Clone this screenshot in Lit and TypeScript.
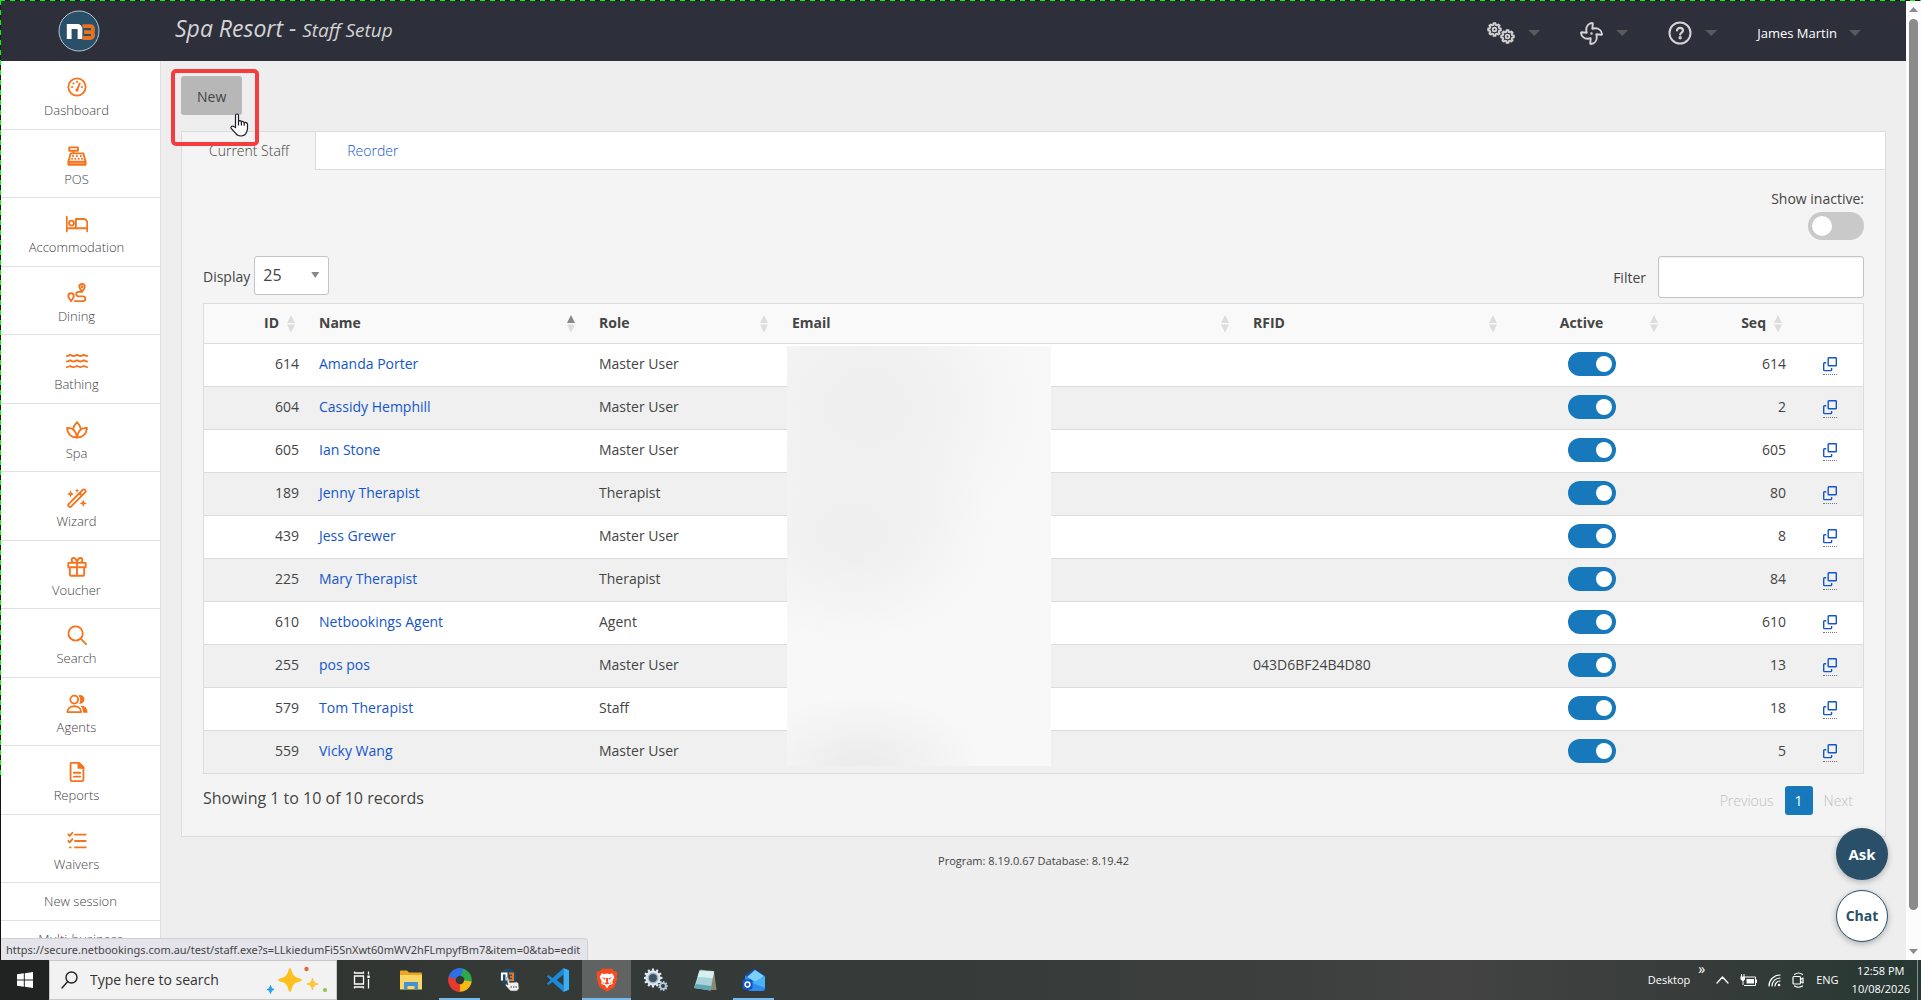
import { LitElement, html, css, svg, nothing } from "lit";
import { customElement, state } from "lit/decorators.js";
import { classMap } from "lit/directives/class-map.js";

interface Staff {
  id: number;
  name: string;
  role: string;
  rfid?: string;
  seq: number;
}

const STAFF: Staff[] = [
  { id: 614, name: "Amanda Porter", role: "Master User", seq: 614 },
  { id: 604, name: "Cassidy Hemphill", role: "Master User", seq: 2 },
  { id: 605, name: "Ian Stone", role: "Master User", seq: 605 },
  { id: 189, name: "Jenny Therapist", role: "Therapist", seq: 80 },
  { id: 439, name: "Jess Grewer", role: "Master User", seq: 8 },
  { id: 225, name: "Mary Therapist", role: "Therapist", seq: 84 },
  { id: 610, name: "Netbookings Agent", role: "Agent", seq: 610 },
  { id: 255, name: "pos pos", role: "Master User", rfid: "043D6BF24B4D80", seq: 13 },
  { id: 579, name: "Tom Therapist", role: "Staff", seq: 18 },
  { id: 559, name: "Vicky Wang", role: "Master User", seq: 5 },
];

const gearPath = (cx: number, cy: number, teeth: number, outer: number, inner: number) => {
  const points: string[] = [];
  const step = (Math.PI * 2) / teeth;
  for (let i = 0; i < teeth; i++) {
    const a = i * step;
    for (const [offset, r] of [[-0.3, inner], [-0.2, outer], [0.2, outer], [0.3, inner]]) {
      const x = cx + r * Math.cos(a + offset * step);
      const y = cy + r * Math.sin(a + offset * step);
      points.push(`${x.toFixed(2)} ${y.toFixed(2)}`);
    }
  }
  return `M${points.join("L")}Z`;
};

const NAV_ICONS: Record<string, unknown> = {
  Dashboard: svg`<circle cx="12" cy="12" r="9.4"/><circle cx="12" cy="15.3" r="1.8" fill="currentColor" stroke="none"/><path d="M12.300 14.600 15 8"/><g fill="currentColor" stroke="none"><circle cx="6.600" cy="12" r="1.200"/><circle cx="8.200" cy="8.200" r="1.200"/><circle cx="12" cy="6.400" r="1.200"/><circle cx="17.400" cy="12" r="1.200"/></g>`,
  POS: svg`<path d="M3.500 2.500h9.500v3.800H3.500zM8.200 6.300V9M5 9.200h14l2.200 8.200v4H2.800v-4z"/><path d="M2.800 18.300h18.400v3H2.800z" fill="currentColor" fill-opacity=".35"/><path d="M7.500 12h.3M11.800 12h.3M16 12h.3M6.500 15h.3M10 15h.3M13.700 15h.3M17.300 15h.3" stroke-width="2"/>`,
  Accommodation: svg`<path d="M.8 4v16M.8 16.600h22.400M23.200 20v-9.500a4 4 0 0 0-4-4h-8.400v10"/><circle cx="6" cy="11" r="2.700"/>`,
  Dining: svg`<path d="M17.500 10.500c-2-2.500-3-4-3-5.500a3 3 0 0 1 6 0c0 1.500-1 3-3 5.500z"/><path d="M5.500 20.800c-2-2.600-3-4-3-5.500a3 3 0 0 1 6 0c0 1.500-1 2.900-3 5.500z"/><path d="M17.500 10.800h-4a2.400 2.400 0 0 0 0 4.800h5a2.600 2.600 0 0 1 0 5.200h-9"/><circle cx="17.500" cy="5.200" r=".6" fill="currentColor"/>`,
  Bathing: svg`<path d="M1 6.500q1.800 0 3.600-1.400 2 1.700 3.700 1.400 1.900 0 3.700-1.400 1.900 1.500 3.700 1.400 1.900 0 3.700-1.400 1.800 1.400 3.600 1.400M1 12.500q1.800 0 3.600-1.400 2 1.700 3.700 1.400 1.900 0 3.700-1.400 1.900 1.500 3.700 1.400 1.900 0 3.700-1.400 1.800 1.400 3.600 1.400M1 18.700q1.800 0 3.600-1.400 2 1.700 3.700 1.400 1.900 0 3.700-1.400 1.900 1.500 3.700 1.400 1.900 0 3.700-1.400 1.800 1.400 3.600 1.400"/>`,
  Spa: svg`<path d="M12 20.200C6 20.500 1.600 16.500 1.200 9.800c5.600-.4 9.700 3.200 10.800 10.400 1.100-7.200 5.200-10.800 10.800-10.400-.4 6.700-4.800 10.700-10.800 10.400z"/><path d="M8 10.300c.6-2.600 2-4.700 4-6.800 2 2.100 3.400 4.200 4 6.800"/>`,
  Wizard: svg`<path d="m2.800 18.600 15.600-15.600a1.500 1.500 0 0 1 2.200 0l.5.500a1.500 1.500 0 0 1 0 2.200L5.500 21.300a1.500 1.500 0 0 1-2.200 0l-.5-.500a1.500 1.500 0 0 1 0-2.200zM14.800 6.800l2.600 2.600"/><g fill="currentColor" stroke="none"><path d="M5 3.500 6.200 6.500 9 7.500 6.200 8.600 5 11.500 3.900 8.600.8 7.500 3.900 6.500zM12 1.500l.7 1.800 1.800.7-1.800.7L12 6.500l-.7-1.800L9.500 4l1.800-.7zM18.800 13.500l1.200 3 3 1.200-3 1.200-1.200 3-1.200-3-3-1.200 3-1.200z"/></g>`,
  Voucher: svg`<path d="M2.500 7.500h19v4.800h-19zM4.200 12.300h15.600v8.200a1 1 0 0 1-1 1H5.200a1 1 0 0 1-1-1zM12 7.500v14M12 7.200C11.300 4 9.800 2 8 2.200 5.400 2.400 5.500 7 8.500 7.300M12 7.200c.7-3.200 2.200-5.200 4-5 2.600.2 2.500 4.800-.5 5.100"/>`,
  Search: svg`<circle cx="10.500" cy="10.300" r="7.800"/><path d="m16 16 6 6"/>`,
  Agents: svg`<circle cx="9" cy="7.200" r="4.300"/><path d="M1.500 20.800c0-8.500 15-8.500 15 0z"/><path d="M13.300 2.600a4.800 4.800 0 1 1 .8 9c2-2.500 2-6.400-.8-9zM15.500 14c4.500-.6 8 2.300 8 7.500h-5c.2-3.300-.8-5.800-3-7.500z" fill="currentColor" stroke="none"/>`,
  Reports: svg`<path d="M5.500 2h8.800L19 6.800V20.500a1.500 1.500 0 0 1-1.500 1.500h-11A1.500 1.500 0 0 1 5 20.500V3a1 1 0 0 1 .5-1z"/><path d="M13.500 2v5.500H19z" fill="currentColor"/><path d="M8.500 12.800h7M8.500 17h7"/>`,
  Waivers: svg`<path d="M9.800 5h11.700M9.800 12h11.700M9.800 19h11.700"/><path d="m2.500 4.800 1.500 1.700L7 3M2.500 11.800 4 13.500 7 10M4.300 19h.8"/>`,
};

const FAN = svg`<path d="M352.570 128c-28.090 0-54.090 4.520-77.060 12.860l12.410-123.110C289 7.310 279.810-1.180 269.330.130 189.630 10.130 128 77.640 128 159.430c0 28.090 4.520 54.090 12.860 77.060L17.750 224.080C7.310 223-1.180 232.190.130 242.670c10 79.700 77.510 141.330 159.300 141.330 28.090 0 54.090-4.520 77.060-12.860l-12.410 123.110c-1.050 10.430 8.110 18.930 18.590 17.620 79.700-10 141.330-77.510 141.330-159.300 0-28.090-4.520-54.090-12.860-77.060l123.110 12.410c10.440 1.050 18.930-8.110 17.620-18.590-10-79.700-77.510-141.330-159.300-141.330z"/><circle cx="256" cy="256" r="30" fill="currentColor" stroke="none"/>`;

@customElement("app-root")
export class AppRoot extends LitElement {
  @state() private showInactive = false;

  static styles = css`
    :host {
      display: block;
      font-family: "Open Sans", "Noto Sans", sans-serif;
      font-size: 14px;
      line-height: 20px;
      color: #444;
    }
    *, *::before, *::after { box-sizing: border-box; }
    a { color: #1355cc; text-decoration: none; }
    svg { display: block; flex: none; }
    button, input, select { font: inherit; color: inherit; margin: 0; }
    .icon { fill: none; stroke: currentColor; stroke-linecap: round; stroke-linejoin: round; }

    .screen { display: flex; flex-direction: column; height: 100vh; overflow: hidden; }
    .browser {
      position: relative;
      flex: 1;
      min-height: 0;
      display: grid;
      grid-template-columns: minmax(0, 1fr) 15px;
      padding: 1px 0 0 1px;
      background:
        repeating-linear-gradient(90deg, #0f0 0 5px, #1c1c1c 5px 10px) 0 0 / 100% 1px no-repeat,
        repeating-linear-gradient(180deg, #0f0 0 5px, #1c1c1c 5px 10px) 0 0 / 1px 778px no-repeat,
        #111;
    }
    .page { display: flex; flex-direction: column; min-height: 0; overflow: hidden; background: #eee; }

    .header { display: flex; align-items: center; height: 60px; flex: none; background: #2d2f3b; color: #d4d4d4; }
    .logo { width: 160px; padding-left: 57px; }
    .title { margin: 0; padding: 0 0 4px 14px; font-size: 23px; line-height: 28px; font-weight: 400; font-style: italic; flex: 1; }
    .subtitle { font-size: 19px; }
    .menus { display: flex; align-items: center; padding: 4px 45px 0 0; }
    .menu { display: flex; align-items: center; gap: 13px; margin-left: 40px; padding: 0; border: 0; background: none; color: #d4d4d4; }
    .menu.user { gap: 12px; color: #fff; font-size: 13px; }
    .caret { width: 12px; height: 6px; background: #5a5a5a; clip-path: polygon(0 0, 100% 0, 50% 100%); }

    .body { display: flex; flex: 1; min-height: 0; }
    .nav { width: 160px; flex: none; background: #fff; border-right: 1px solid #e2dde2; overflow: hidden; }
    .nav-item {
      display: flex; flex-direction: column; align-items: center; gap: 2px;
      height: 68px; padding: 15px 8px 0 0;
      border-bottom: 1px solid #e2dfe4; color: #444; font-weight: 300; font-size: 13px;
    }
    .nav-item:nth-child(odd) { height: 69px; }
    .nav-item svg { color: #f4731c; }
    .nav-link { display: block; height: 38px; padding: 8px 0; text-align: center; border-bottom: 1px solid #e2dfe4; color: #444; font-weight: 300; font-size: 13px; }

    .main { flex: 1; min-width: 0; padding: 15px 20px 0; }
    .toolbar { position: relative; display: flex; }
    .new { height: 39px; padding: 2px 16px 0; border: 0; border-radius: 3px; background: #b7b7b7; color: #444; font-size: 14px; }
    .highlight { position: absolute; left: -10px; top: -7px; width: 88px; height: 77px; border: 4px solid #f63c3c; border-radius: 5px; z-index: 2; }
    .cursor { position: absolute; left: 49px; top: 37px; z-index: 3; }

    .panel { margin-top: 16px; border: 1px solid #dcdcdc; background: #f4f4f4; }
    .tabs { display: flex; gap: 5px; background: #fff; border-bottom: 1px solid #dcdcdc; }
    .tab { height: 37px; padding: 0 26px; border: 0; background: none; color: #1355cc; font-weight: 300; }
    .tab.current { height: 38px; margin-bottom: -1px; padding: 0 26px 0 27px; background: #f4f4f4; border-right: 1px solid #dcdcdc; color: #444; }
    .content { padding: 19px 21px 21px; }
    .inactive { display: flex; flex-direction: column; align-items: flex-end; gap: 3px; }
    .switch {
      appearance: none; display: block; width: 48px; height: 24px; margin: 0 auto; padding: 4px;
      border-radius: 14px; background: #c9c9c9;
    }
    .switch::before { content: ""; display: block; width: 16px; height: 16px; border-radius: 50%; background: #fff; }
    .switch:checked { background: #1779bb; }
    .switch:checked::before { margin-left: auto; }
    .switch.large { width: 56px; height: 28px; margin: 0; }
    .switch.large::before { width: 20px; height: 20px; }

    .controls { display: flex; justify-content: space-between; margin: 16px 0 5px; }
    .control { display: flex; align-items: center; }
    .control label { padding-top: 2px; }
    .length { gap: 4px; height: 39px; }
    .select { position: relative; }
    .select select { appearance: none; display: block; width: 75px; height: 39px; padding: 0 8px 2px; border: 1px solid #c4c4c4; border-radius: 3px; background: #fff; font-size: 16px; }
    .select::after { content: ""; position: absolute; right: 10px; top: 16px; width: 8px; height: 6px; background: #888; clip-path: polygon(0 0, 100% 0, 50% 100%); pointer-events: none; }
    .filter { gap: 12px; }
    .filter input { width: 206px; height: 42px; padding: 0 8px; border: 1px solid #c4c4c4; border-radius: 3px; background: #fff; box-shadow: inset 0 1px 2px #0001; }

    .table-wrap { position: relative; }
    table { width: 100%; table-layout: fixed; border-collapse: separate; border-spacing: 0; border: 1px solid #dcdcdc; border-bottom: 0; }
    th, td { padding: 0 10px 2px; border-bottom: 1px solid #dcdcdc; text-align: left; }
    th { position: relative; height: 40px; padding-right: 30px; background: #f9f9f9; font-weight: 700; }
    td { height: 43px; background: #fff; }
    tr:nth-child(even) td { background: #f0f0f0; }
    .num { text-align: right; }
    .mid { text-align: center; }
    .sort { position: absolute; right: 14px; top: 11px; width: 8px; height: 18px; }
    .copy { display: block; width: 14px; margin: 3px auto 0; padding-bottom: 2px; border-bottom: 1px dotted #777; }
    .redacted {
      position: absolute; left: 584px; top: 43px; width: 264px; height: 420px;
      background:
        radial-gradient(ellipse 170px 150px at 80px 60px, #efefef 20%, #efefef00),
        radial-gradient(ellipse 140px 110px at 65px 185px, #efefef 20%, #efefef00),
        radial-gradient(ellipse 120px 70px at 75px 420px, #ececec 10%, #ececec00),
        #f8f8f8;
    }
    .summary { display: flex; justify-content: space-between; margin-top: 12px; font-size: 16px; line-height: 24px; }
    .pages { display: flex; align-items: center; gap: 11px; padding-right: 11px; font-size: 14px; line-height: 20px; }
    .page-step { padding: 0; border: 0; background: none; color: #c0c0c0; font-weight: 300; }
    .page-number { width: 28px; height: 29px; padding: 0; border: 0; border-radius: 3px; background: #1779bb; color: #fff; }
    .version { margin: 14px 0 0; text-align: center; font-size: 11px; }

    .float { position: absolute; right: 33px; width: 52px; height: 52px; padding: 0; border-radius: 50%; font-weight: 700; font-size: 15px; box-shadow: 0 2px 6px #0004; }
    .ask { bottom: 80px; border: 0; background: #295068; color: #fff; }
    .chat { bottom: 18px; border: 1px solid #295068; background: #fff; color: #295068; font-size: 14px; }
    .status {
      position: absolute; left: 1px; bottom: 0; height: 22px; padding: 0 7px 0 5px;
      border: 1px solid #d0cfd4; border-width: 1px 1px 0 0; border-radius: 0 4px 0 0;
      background: #e5e4eb; font-family: "Noto Sans", sans-serif; font-size: 11px; line-height: 22px;
    }
    .scrollbar { display: flex; flex-direction: column; align-items: center; background: #fcfcfc; padding: 6px 0; gap: 7px; }
    .arrow { width: 9px; height: 5px; background: #8b8b8b; clip-path: polygon(50% 0, 100% 100%, 0 100%); }
    .arrow.down { clip-path: polygon(0 0, 100% 0, 50% 100%); }
    .track { flex: 1; width: 9px; display: grid; grid-template-rows: 28fr 1fr; }
    .thumb { border-radius: 5px; background: #8b8b8b; }

    .taskbar {
      display: flex; height: 40px; flex: none; color: #fff; font-size: 11px; line-height: 18px;
      background: linear-gradient(90deg, #262927 0, #343936 25%, #343b38 45%, #3a3d3c 62%, #424342 76%, #373c3a 88%, #263833);
    }
    .start { display: grid; place-items: center; width: 49px; padding: 0; border: 0; background: #202322; }
    .search { display: flex; align-items: center; gap: 12px; width: 288px; padding: 0 8px 0 11px; background: #f2f2f2; border: 1px solid #c8c8c8; color: #222; }
    .search input { flex: 1; min-width: 0; padding: 0; border: 0; outline: 0; background: none; font-size: 14px; }
    .search input::placeholder { color: #333; opacity: 1; }
    .app { display: grid; place-items: center; width: 49px; padding: 0; border: 0; background: none; }
    .app.open { box-shadow: inset 0 -2px #76b9ed; margin: 0 4px; width: 41px; }
    .app.active { background: #5f6462; margin: 0; width: 49px; }
    .tray { display: flex; align-items: center; margin-left: auto; gap: 11px; padding-right: 3px; }
    .more { align-self: flex-start; margin-left: -3px; font-size: 14px; }
    .clock { text-align: center; margin-left: 2px; }
    .peek { width: 1px; align-self: stretch; background: #89908d; margin-left: -4px; }
  `;

  private sortIcon(up = false) {
    return html`<svg class="sort" viewBox="0 0 8 18"><path d="M4 0 8 8H0z" fill=${up ? "#888" : "#ddd"} /><path d="M0 9.500h8L4 17.500z" fill="#ddd" /></svg>`;
  }

  private renderHeader() {
    return html`
      <header class="header">
        <div class="logo">
          <svg width="42" height="42" viewBox="0 0 42 42">
            <circle cx="21" cy="21" r="20" fill="#295068" stroke="#b9c4cc" />
            <path d="M11.200 29V16.500h8.300a2.500 2.500 0 0 1 2.500 2.500V29" fill="none" stroke="#fff" stroke-width="4.800" />
            <path d="M24.500 16.200h8a2.500 2.500 0 0 1 2.500 2.500v1.300a2.200 2.200 0 0 1-2.200 2.200H26M32.800 22.300a2.200 2.200 0 0 1 2.200 2.200v1a2.500 2.500 0 0 1-2.500 2.500H24.500" fill="none" stroke="#e8721f" stroke-width="3.800" />
          </svg>
        </div>
        <h1 class="title">Spa Resort - <span class="subtitle">Staff Setup</span></h1>
        <div class="menus">
          <button class="menu">
            <svg class="icon" width="28" height="22" viewBox="0 0 28 22" stroke-width="1.800">
              <path d=${gearPath(7.5, 7.5, 8, 6.4, 4.8)} /><circle cx="7.500" cy="7.500" r="1.800" />
              <path d=${gearPath(20.5, 14.5, 8, 6.4, 4.8)} /><circle cx="20.500" cy="14.500" r="1.800" />
            </svg>
            <i class="caret"></i>
          </button>
          <button class="menu">
            <svg class="icon" width="23" height="23" viewBox="-24 -24 560 560" stroke-width="46">${FAN}</svg>
            <i class="caret"></i>
          </button>
          <button class="menu">
            <svg class="icon" width="24" height="24" viewBox="0 0 24 24" stroke-width="2">
              <circle cx="12" cy="12" r="10.500" />
              <path d="M9 9.500C9 6 15 6.200 15 9.600c0 2-2.800 2-2.800 4" stroke-width="2.200" /><circle cx="12.200" cy="16.700" r=".7" fill="currentColor" />
            </svg>
            <i class="caret"></i>
          </button>
          <button class="menu user">James Martin<i class="caret"></i></button>
        </div>
      </header>
    `;
  }

  private renderTable() {
    return html`
      <div class="table-wrap">
        <table>
          <colgroup>
            ${[105, 280, 193, 461, 268, 161, 124, 67].map((w) => html`<col style="width:${w}px" />`)}
          </colgroup>
          <thead>
            <tr>
              <th class="num">ID${this.sortIcon()}</th>
              <th>Name${this.sortIcon(true)}</th>
              <th>Role${this.sortIcon()}</th>
              <th>Email${this.sortIcon()}</th>
              <th>RFID${this.sortIcon()}</th>
              <th class="mid" id="active">Active${this.sortIcon()}</th>
              <th class="num">Seq${this.sortIcon()}</th>
              <th></th>
            </tr>
          </thead>
          <tbody>
            ${STAFF.map(
              (s) => html`
                <tr>
                  <td class="num">${s.id}</td>
                  <td><a href="#" id="staff-${s.id}">${s.name}</a></td>
                  <td>${s.role}</td>
                  <td></td>
                  <td>${s.rfid ?? nothing}</td>
                  <td><input class="switch" type="checkbox" aria-labelledby="active staff-${s.id}" checked /></td>
                  <td class="num">${s.seq}</td>
                  <td>
                    <a class="copy" href="#" aria-labelledby="staff-${s.id}">
                      <svg width="14" height="15" viewBox="0 0 14 15" fill="none" stroke="#1355cc" stroke-width="1.400">
                        <rect x="5.200" y=".7" width="8.100" height="8.100" rx=".6" />
                        <path d="M3.200 5.700H1.500a.8.800 0 0 0-.8.800v6.300a.8.800 0 0 0 .8.800h6.300a.8.800 0 0 0 .8-.8v-1.800" />
                      </svg>
                    </a>
                  </td>
                </tr>
              `,
            )}
          </tbody>
        </table>
        <div class="redacted"></div>
      </div>
    `;
  }

  private renderTaskbar() {
    const apps = [
      { icon: svg`<g fill="none" stroke="#fff" stroke-width="1.300"><path d="M4.500 8h9v8h-9zM4.500 3.500V5h9V3.500M4.500 20.500V19h9v1.500M18.500 3.500v3M18.500 11v9.500"/></g><path d="M17.300 7.500h2.500v2.500h-2.500z" fill="#fff"/>` },
      { icon: svg`<path d="M1 3.500A1 1 0 0 1 2 2.500h6l2 2h12a1 1 0 0 1 1 1V21H1z" fill="#e8a623"/><path d="M1 7h22v14.500H1z" fill="#fbd667"/><path d="M5 21.500V15a1 1 0 0 1 1-1h12a1 1 0 0 1 1 1v6.500h-3.500V18h-7v3.500z" fill="#3f93d6"/>` },
      { cls: "open", icon: svg`<g fill="none" stroke-width="7.500"><path d="M6.300 6.300a8 8 0 0 1 9-1.600" stroke="#2f6fe8"/><path d="M14 4.300a8 8 0 0 1 5.700 9.700" stroke="#2bab4e"/><path d="M19.900 13a8 8 0 0 1-9.200 6.900" stroke="#f7b916"/><path d="M12 20A8 8 0 0 1 5 8" stroke="#e63a2e"/><path d="M4.200 10a8 8 0 0 1 4.600-5.300" stroke="#2f6fe8"/></g>` },
      { icon: svg`<circle cx="11" cy="9" r="8.500" fill="#244a63"/><path d="M5 12.500V5.500h4.500v7" fill="none" stroke="#fff" stroke-width="2"/><path d="M12 5.500h4v3.200h-3 3V12h-4" fill="none" stroke="#e8721f" stroke-width="2"/><path d="M9.500 9.500c1-.8 1.800-.2 2 .5l1.200 4.500 7.300-.5 1.500 1.500.5 5-2 2.500h-6.500l-5-5.500c-.3-1.500 1-1.800 2.500-.5z" fill="#f0f0f0" stroke="#555" stroke-width=".6"/><path d="M13.500 19h6.500" stroke="#777" stroke-width="1.500" stroke-dasharray="1.500 1"/>` },
      { icon: svg`<path d="M17.500 0 6.500 10 2.500 7 .8 8.200 4.600 12 .8 15.800 2.500 17l4-3 11 10V17.500L10.800 12l6.700-5.500z" fill="#1c8ad6"/><path d="M17.500 0 23 2.200v19.500L17.500 24z" fill="#37aef5"/>` },
      { cls: "open active", icon: svg`<path d="M7 .8h10l2.500 2.800 2-.3 1 3-.8 2.200.5 2-2.600 8.500L12 23.800l-7.600-4.800L1.800 10.500l.5-2-.8-2.200 1-3 2 .3z" fill="#fb4b1e"/><path d="m6.500 5.500 3 .4L12 5.500l2.500.4 3-.4 1.800 3.500-2 4.500.4 2.500-3.700 1.200L12 20.500l-2-3.300L6.300 16l.4-2.500-2-4.500z" fill="#fff"/><path d="m7 9.300 3.300.8-.5 1.700zM17 9.300l-3.300.8.5 1.700zM10.800 10h2.400l-.3 4 1.500 1.500-2.400 1-2.400-1 1.500-1.500zM8 14l1.500 1.500L8 15.500zM16 14l-1.500 1.500 1.500 0z" fill="#fb4b1e"/>` },
      { icon: svg`<path d=${gearPath(9, 10, 12, 9.5, 7.5)} fill="#dfe8ef"/><circle cx="9" cy="10" r="4.700" fill="#3f5263" stroke="#9fb3c4" stroke-width="1.500"/><path d=${gearPath(19, 18, 9, 5, 3.8)} fill="#b9cbdb"/><circle cx="19" cy="18" r="2" fill="#34404a"/>` },
      { icon: svg`<path d="M7 1.500 21 3l2.500 19L18 22z" fill="#8d8a72"/><path d="M6.500 2.500 21 3.500 17.500 22.500 1 20z" fill="#a9d3d9"/><path d="M6.500 2.500 21 3.500 19.800 10 4.500 9z" fill="#d9f0f2"/><path d="M3 16 18.400 18 17.500 22.500 1 20z" fill="#62a5b3"/>` },
      { cls: "open", icon: svg`<path d="M12.500.8 23 7.500V21a2 2 0 0 1-2 2H6L3 7.500z" fill="#1b4db8"/><path d="m5 9 8-7 9 6-9 8z" fill="#7cd1fa"/><path d="M3 7.500 23 20a2.500 2.500 0 0 1-2.500 3H8l-5-5z" fill="#2f8bf0"/><path d="M23 8v12L10 15z" fill="#48b2f8"/><rect x=".5" y="11.500" width="10" height="10" rx="2" fill="#0f57c4"/><circle cx="5.500" cy="16.500" r="2.400" fill="none" stroke="#fff" stroke-width="1.500"/>` },
    ];
    return html`
      <footer class="taskbar">
        <button class="start">
          <svg width="16" height="16" viewBox="0 0 16 16" fill="#fff"><path d="M0 2.300 6.800 1.300v6.200H0zM7.800 1.200 16 0v7.500H7.800zM0 8.500h6.800v6.200L0 13.700zM7.800 8.500H16V16l-8.200-1.200z" /></svg>
        </button>
        <label class="search">
          <svg class="icon" width="17" height="18" viewBox="0 0 17 18" stroke-width="1.400"><circle cx="10.500" cy="6.500" r="5.500" /><path d="M6.500 10.800 1 17" /></svg>
          <input type="text" placeholder="Type here to search" />
          <svg width="62" height="28" viewBox="0 0 62 28">
            <path d="M24 2q1 0 1.800 3c1.200 4.500 2.700 6 7.200 7.200q3 .8 3 1.800t-3 1.800c-4.500 1.200-6 2.700-7.200 7.200q-.8 3-1.800 3t-1.800-3c-1.200-4.500-2.700-6-7.200-7.200q-3-.8-3-1.800t3-1.800c4.500-1.200 6-2.700 7.200-7.200q.8-3 1.800-3z" fill="#fdc01c" />
            <path d="M46.500 12c1 4 1.800 5 5.500 6-3.700 1-4.500 2-5.500 6-1-4-1.800-5-5.500-6 3.700-1 4.500-2 5.500-6z" fill="#fcc53a" stroke="#fcc53a" />
            <path d="M4.500 19.500c.5 2.500 1.200 3.200 3.500 4-2.300.8-3 1.500-3.500 4-.5-2.500-1.200-3.200-3.500-4 2.300-.8 3-1.500 3.500-4z" fill="#1ea0e6" stroke="#1ea0e6" />
            <circle cx="40.500" cy="3" r="2.200" fill="#e8683a" /><circle cx="59" cy="24" r="2" fill="#8cc541" />
          </svg>
        </label>
        ${apps.map(
          (a) => html`<button class="app ${a.cls ?? ""}"><svg width="24" height="24" viewBox="0 0 24 24">${a.icon}</svg></button>`,
        )}
        <div class="tray">
          <span>Desktop</span>
          <span class="more">»</span>
          <svg class="icon" width="13" height="8" viewBox="0 0 13 8" stroke-width="1.300"><path d="M1 7l5.500-6L12 7" /></svg>
          <svg width="17" height="13" viewBox="0 0 17 13"><path d="M5 3h10.500v8.500H4" fill="none" stroke="#fff" /><path d="M6.500 5H14v4.500H6.500zM15.500 5.500H17v3.500h-1.500zM.5 2.500h4.500v3L3.500 7v4h-1V7L.5 5.500zM1 0h1v2.500H1zM3.500 0h1v2.500h-1z" fill="#fff" /></svg>
          <svg class="icon" width="13" height="13" viewBox="0 0 13 13" stroke-width="1.200"><path d="M1 12A11 11 0 0 1 12 1M4 12a8 8 0 0 1 8-8M7 12a5 5 0 0 1 5-5" /><circle cx="11" cy="11" r="1.300" fill="#fff" stroke="none" /></svg>
          <svg class="icon" width="13" height="16" viewBox="0 0 13 16" stroke-width="1.200"><path d="M2.500 2.500q4-3 8 0M2.500 14q4 2.500 8 0" /><rect x="1" y="4.500" width="7.500" height="7.500" rx="1" /><path d="m8.500 7.500 2.500-1.500v5L8.500 9.500" /></svg>
          <span>ENG</span>
          <div class="clock">12:58 PM<br />10/08/2026</div>
          <i class="peek"></i>
        </div>
      </footer>
    `;
  }

  render() {
    return html`
      <div class="screen">
        <div class="browser">
          <div class="page">
            ${this.renderHeader()}
            <div class="body">
              <nav class="nav">
                ${Object.entries(NAV_ICONS).map(
                  ([label, icon]) => html`
                    <a class="nav-item" href="#">
                      <svg class="icon" width="22" height="22" viewBox="0 0 24 24" stroke-width="2">${icon}</svg>
                      ${label}
                    </a>
                  `,
                )}
                <a class="nav-link" href="#">New session</a>
                <a class="nav-link" href="#">Multi-business</a>
              </nav>
              <main class="main">
                <div class="toolbar">
                  <button class="new">New</button>
                  <div class="highlight"></div>
                  <svg class="cursor" width="19" height="25" viewBox="0 0 19 25">
                    <path d="M5.500 14.500V2.500a1.500 1.500 0 0 1 3 0V8.500c.6-1.300 2.600-1 2.900.5.800-1 2.600-.6 2.800.8 1-.7 3.200-.3 3.300 1.500v4.500c0 2-1 3-1.500 4.500-1 2-2.500 2.700-5 2.700-3.200 0-4.600-1.300-5.500-3L1.200 15.500c-.8-1.800 1-3.200 2.600-2z" fill="#fff" stroke="#1c1c28" stroke-width="1.200" />
                    <path d="M8.500 8v4.500M11.400 9v3.500M14.200 9.800v3" fill="none" stroke="#1c1c28" stroke-width="1.200" />
                  </svg>
                </div>
                <section class="panel">
                  <div class="tabs" role="tablist">
                    <button class="tab current" role="tab" aria-selected="true">Current Staff</button>
                    <button class="tab" role="tab">Reorder</button>
                  </div>
                  <div class="content">
                    <div class="inactive">
                      <label for="inactive">Show inactive:</label>
                      <input
                        id="inactive"
                        class=${classMap({ switch: true, large: true })}
                        type="checkbox"
                        .checked=${this.showInactive}
                        @change=${(e: Event) => (this.showInactive = (e.target as HTMLInputElement).checked)}
                      />
                    </div>
                    <div class="controls">
                      <div class="control length">
                        <label for="length">Display</label>
                        <span class="select"><select id="length"><option>25</option></select></span>
                      </div>
                      <div class="control filter">
                        <label for="filter">Filter</label>
                        <input id="filter" type="text" />
                      </div>
                    </div>
                    ${this.renderTable()}
                    <div class="summary">
                      <span>Showing 1 to 10 of 10 records</span>
                      <div class="pages">
                        <button class="page-step">Previous</button>
                        <button class="page-number">1</button>
                        <button class="page-step">Next</button>
                      </div>
                    </div>
                  </div>
                </section>
                <p class="version">Program: 8.19.0.67 Database: 8.19.42</p>
              </main>
            </div>
          </div>
          <div class="scrollbar"><i class="arrow"></i><div class="track"><div class="thumb"></div></div><i class="arrow down"></i></div>
          <button class="float ask">Ask</button>
          <button class="float chat">Chat</button>
          <div class="status">https://secure.netbookings.com.au/test/staff.exe?s=LLkiedumFi5SnXwt60mWV2hFLmpyfBm7&amp;item=0&amp;tab=edit</div>
        </div>
        ${this.renderTaskbar()}
      </div>
    `;
  }
}
